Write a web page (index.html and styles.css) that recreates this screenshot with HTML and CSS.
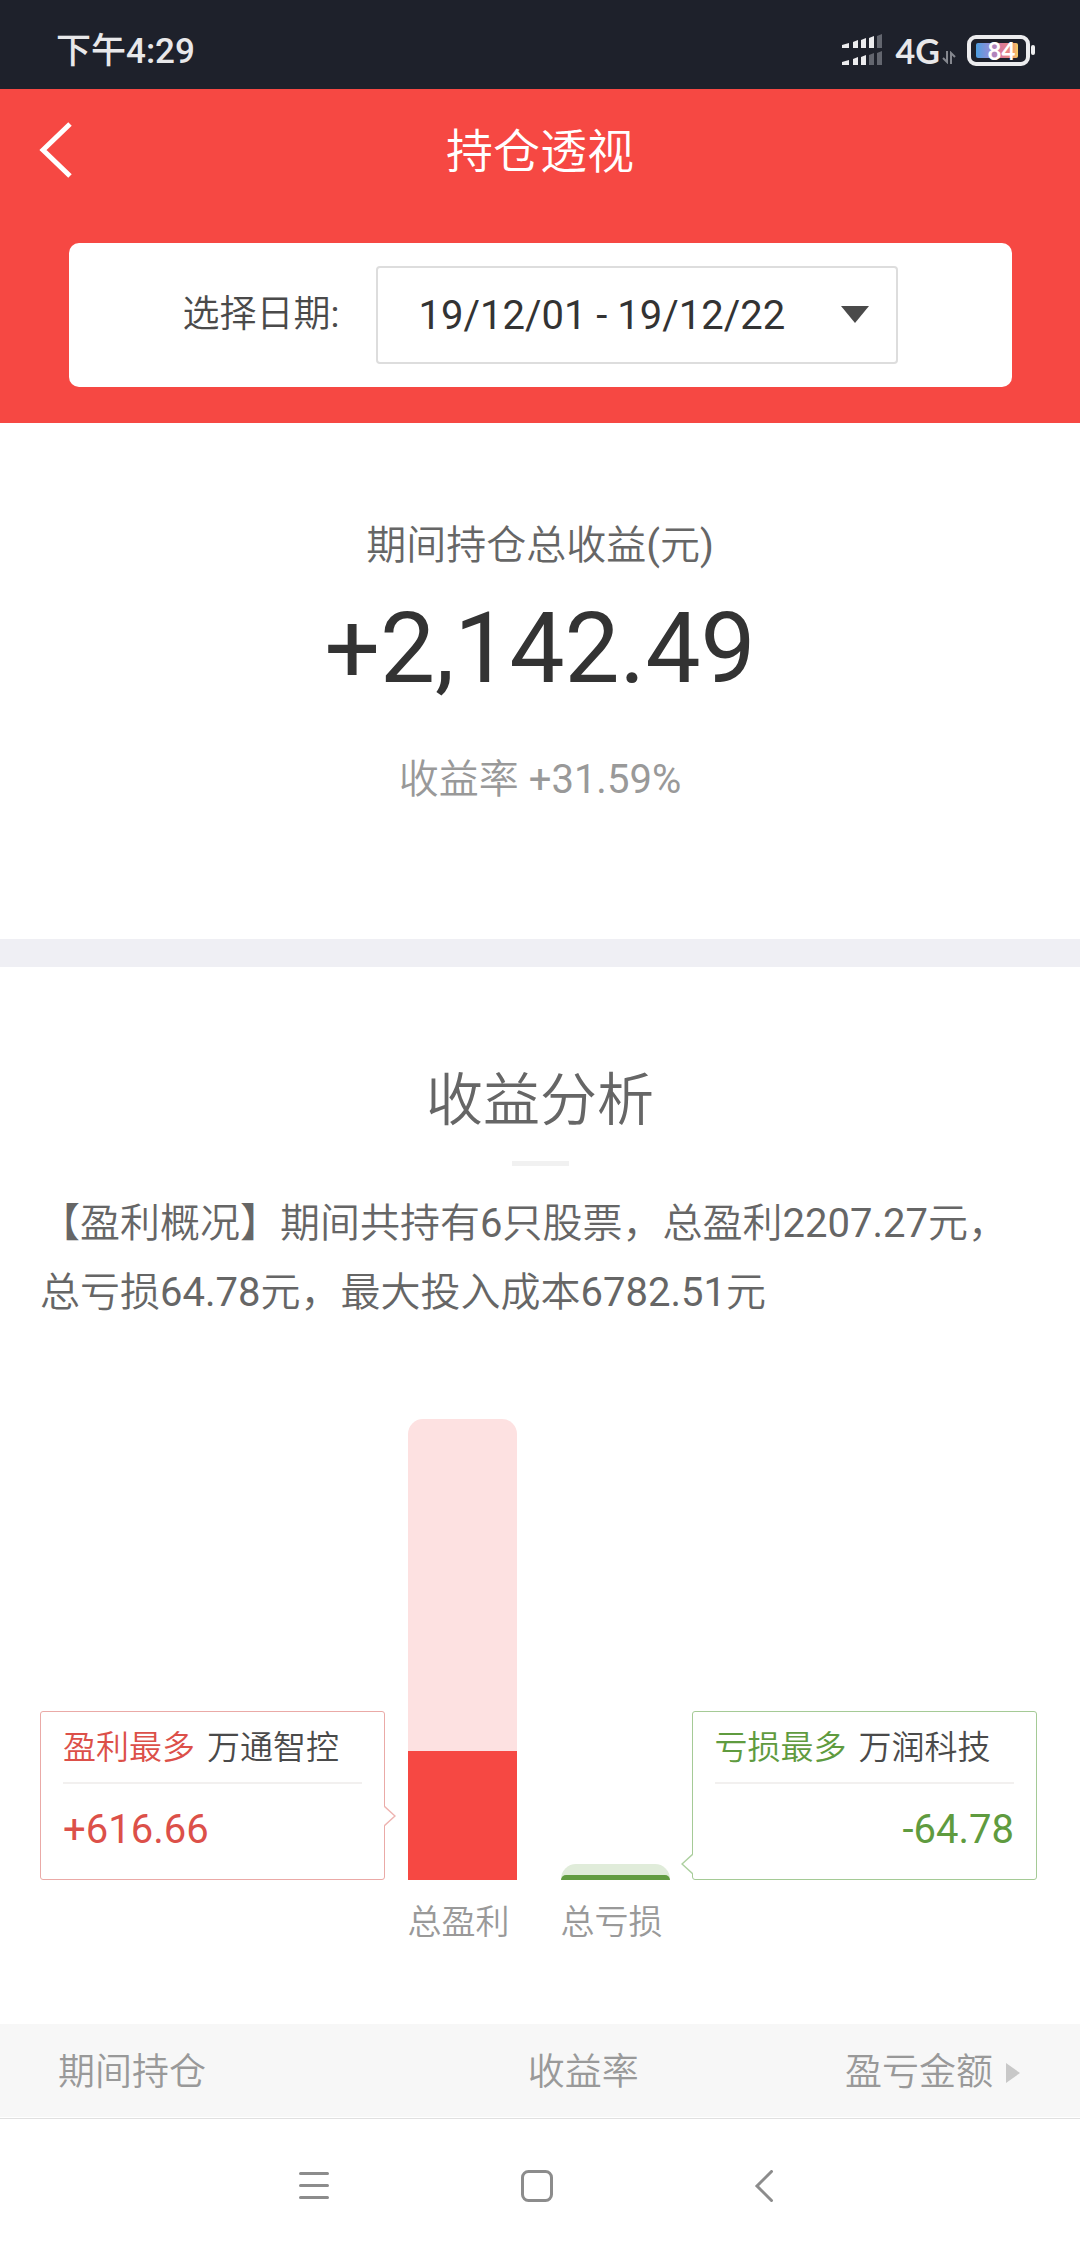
FILE: index.html
```html
<!DOCTYPE html>
<html lang="zh-CN">
<head>
<meta charset="utf-8">
<meta name="viewport" content="width=device-width, initial-scale=1">
<title>持仓透视</title>
<link rel="stylesheet" href="styles.css">
</head>
<body>
<div class="status-bar">
  <time class="status-time">下午4:29</time>
  <div class="status-icons">
    <svg class="signal" width="42" height="34" viewBox="0 0 42 34" aria-hidden="true">
      <g fill="#ececee">
        <path d="M1 11l7-2v5H1zM12 8l5-2v8h-5zM20 6l5-2v10h-5zM28 4l5-2v12h-5z"/>
        <path d="M1 28l7-2v5H1zM12 25l5-2v8h-5zM20 23l5-2v10h-5z"/>
      </g>
      <path fill="#63666f" d="M36 2l5-2v14h-5zM28 21l5-2v12h-5zM36 19l5-2v14h-5z"/>
    </svg>
    <span class="network">4G</span>
    <svg class="traffic" width="14" height="13" viewBox="0 0 14 13" aria-hidden="true">
      <path fill="none" stroke="#85878e" stroke-width="2" d="M5 0v11L1 7M9 13V2l4 4"/>
    </svg>
    <div class="battery">
      <svg width="70" height="32" viewBox="0 0 70 32" aria-hidden="true">
        <defs>
          <linearGradient id="charge">
            <stop offset="0" stop-color="#4d9fe0"/>
            <stop offset=".3" stop-color="#8d8fd8"/>
            <stop offset=".6" stop-color="#d9799b"/>
            <stop offset=".85" stop-color="#ee8d77"/>
            <stop offset="1" stop-color="#f4cf62"/>
          </linearGradient>
        </defs>
        <rect x="2" y="2" width="59" height="27" rx="7" fill="none" stroke="#ececee" stroke-width="4"/>
        <rect x="9" y="8" width="42" height="15" rx="2" fill="url(#charge)"/>
        <rect x="64" y="10" width="4" height="10" rx="2" fill="#ececee"/>
      </svg>
      <span class="battery-level">84</span>
    </div>
  </div>
</div>

<header class="hero">
  <div class="title-bar">
    <button class="back" type="button" aria-label="返回">
      <svg width="34" height="56" viewBox="0 0 34 56" aria-hidden="true"><path d="M32 2L5 28l27 26" fill="none" stroke="#fff" stroke-width="5"/></svg>
    </button>
    <h1 class="page-title">持仓透视</h1>
  </div>
  <div class="date-card">
    <label class="date-label" for="range">选择日期:</label>
    <div class="date-field">
      <select class="date-select" id="range">
        <option>19/12/01 - 19/12/22</option>
      </select>
      <svg class="caret" width="28" height="17" viewBox="0 0 28 17" aria-hidden="true"><path d="M0 0h28L14 17z" fill="#4a4a4a"/></svg>
    </div>
  </div>
</header>

<main>
  <section class="summary">
    <p class="summary-label">期间持仓总收益(元)</p>
    <p class="summary-total">+2,142.49</p>
    <p class="summary-rate">收益率 +31.59%</p>
  </section>

  <section class="analysis">
    <h2 class="analysis-title">收益分析</h2>
    <p class="analysis-text">【盈利概况】期间共持有6只股票，总盈利2207.27元，总亏损64.78元，最大投入成本6782.51元</p>
    <div class="chart">
      <div class="callout callout-gain">
        <p class="callout-head"><span class="callout-tag">盈利最多</span><span>万通智控</span></p>
        <p class="callout-value">+616.66</p>
        <svg class="notch" width="12" height="20" viewBox="0 0 12 20" aria-hidden="true"><path d="M0 0l11 10L0 20" fill="#fff" stroke="#eeb4b1" stroke-width="1.5"/></svg>
      </div>
      <div class="bar bar-gain" style="height: 461px"><div class="bar-top bar-top-gain" style="height: 28%"></div></div>
      <div class="bar bar-loss" style="height: 16px"><div class="bar-top bar-top-loss" style="height: 31%"></div></div>
      <div class="callout callout-loss">
        <p class="callout-head"><span class="callout-tag">亏损最多</span><span>万润科技</span></p>
        <p class="callout-value">-64.78</p>
        <svg class="notch" width="12" height="20" viewBox="0 0 12 20" aria-hidden="true"><path d="M12 0L1 10l11 10" fill="#fff" stroke="#add0a0" stroke-width="1.5"/></svg>
      </div>
      <p class="bar-label bar-label-gain">总盈利</p>
      <p class="bar-label">总亏损</p>
    </div>
  </section>

  <table class="holdings">
    <thead>
      <tr>
        <th class="col-name" scope="col">期间持仓</th>
        <th class="col-rate" scope="col">收益率</th>
        <th class="col-amount" scope="col">
          <button class="sort" type="button">盈亏金额<svg width="14" height="20" viewBox="0 0 14 20" aria-hidden="true"><path d="M0 0l14 10L0 20z" fill="#c8c8c8"/></svg></button>
        </th>
      </tr>
    </thead>
  </table>
</main>

<nav class="system-nav">
  <button class="nav-button" type="button" aria-label="最近任务"><svg width="34" height="34" viewBox="0 0 34 34"><path d="M3.5 3.5h27M3.5 15.5h27M3.5 27.5h27" stroke="#8c8c8c" stroke-width="3" stroke-linecap="round"/></svg></button>
  <button class="nav-button" type="button" aria-label="主屏幕"><svg width="34" height="34" viewBox="0 0 34 34"><rect x="2.5" y="1.5" width="29" height="29" rx="6" fill="none" stroke="#8c8c8c" stroke-width="3"/></svg></button>
  <button class="nav-button" type="button" aria-label="返回"><svg width="34" height="34" viewBox="0 0 34 34"><path d="M28.5 1.5L14 16l14.5 14.5" fill="none" stroke="#8c8c8c" stroke-width="3" stroke-linecap="round"/></svg></button>
</nav>
</body>
</html>
```

FILE: styles.css
```css
* {
  box-sizing: border-box;
}

body {
  margin: 0;
  background: #fff;
  color: #666;
  font-family: Roboto, "Noto Sans CJK SC DemiLight", "Noto Sans CJK SC", sans-serif;
  font-size: 40px;
  font-weight: 400;
}

h1, h2, p {
  margin: 0;
  font-weight: inherit;
}

button, select {
  margin: 0;
  padding: 0;
  border: 0;
  background: none;
  color: inherit;
  font: inherit;
}

svg {
  display: block;
}

/* Status bar */
.status-bar {
  display: flex;
  align-items: center;
  justify-content: space-between;
  height: 89px;
  padding: 12px 43px 0 56px;
  background: #1e212b;
  color: #e8e8ea;
}

.status-time {
  padding-top: 2px;
  font-family: Roboto, "Noto Sans CJK SC", sans-serif;
  font-size: 35px;
  font-weight: 500;
  line-height: 40px;
}

.status-icons {
  display: flex;
  align-items: center;
}

.network {
  margin-left: 13px;
  font-family: Lato, sans-serif;
  font-size: 34px;
  font-weight: 700;
  line-height: 38px;
}

.traffic {
  align-self: flex-end;
  margin: 0 11px 6px 2px;
}

.battery {
  position: relative;
}

.battery-level {
  position: absolute;
  inset: 0 1px 0 0;
  color: #fff;
  font-family: Lato, sans-serif;
  font-size: 24px;
  font-weight: 700;
  line-height: 31px;
  text-align: center;
}

/* Header */
.hero {
  padding-bottom: 36px;
  background: #f64843;
}

.title-bar {
  display: grid;
  grid-template-columns: 1fr auto 1fr;
  align-items: center;
  height: 122px;
  padding: 0 38px;
  color: #fff;
}

.back {
  justify-self: start;
}

.page-title {
  padding-top: 4px;
  font-size: 47px;
  line-height: 56px;
}

.date-card {
  display: flex;
  align-items: center;
  justify-content: center;
  gap: 37px;
  height: 144px;
  margin: 32px 68px 0 69px;
  border-radius: 10px;
  background: #fff;
}

.date-label {
  color: #4a4a4a;
  font-size: 37px;
  line-height: 48px;
}

.date-field {
  position: relative;
  width: 522px;
}

.date-select {
  display: block;
  width: 100%;
  height: 98px;
  padding: 0 40px;
  border: 2px solid #ddd;
  border-radius: 4px;
  appearance: none;
  color: #333;
}

.caret {
  position: absolute;
  top: 40px;
  right: 29px;
  pointer-events: none;
}

/* Summary */
.summary {
  padding: 95px 40px 131px;
  border-bottom: 28px solid #efeff4;
  text-align: center;
}

.summary-label {
  line-height: 56px;
}

.summary-total {
  margin-top: 25px;
  color: #333;
  font-size: 98px;
  line-height: 100px;
}

.summary-rate {
  margin-top: 53px;
  color: #999;
  line-height: 56px;
}

/* Analysis */
.analysis {
  padding: 94px 40px 78px;
}

.analysis-title {
  font-size: 57px;
  line-height: 80px;
  text-align: center;
}

.analysis-title::after {
  content: "";
  display: block;
  width: 57px;
  height: 5px;
  margin: 20px auto 0;
  background: #f1f1f1;
}

.analysis-text {
  margin-top: 23px;
  line-height: 69px;
}

.chart {
  display: grid;
  grid-template-columns: 1fr 109px 109px 1fr;
  align-items: end;
  column-gap: 44px;
  margin: 92px 3px 0 0;
}

.bar {
  display: flex;
  align-items: flex-end;
  border-radius: 15px 15px 0 0;
  overflow: hidden;
}

.bar-gain {
  background: #fde1e1;
}

.bar-loss {
  background: #e0ecda;
}

.bar-top {
  width: 100%;
}

.bar-top-gain {
  background: #f64843;
}

.bar-top-loss {
  border-radius: 5px 5px 0 0;
  background: #629c42;
}

.callout {
  position: relative;
  height: 169px;
  padding: 2px 22px 0;
  border: 1px solid;
  border-radius: 3px;
}

.callout-gain {
  margin-right: -21px;
  border-color: #eaaaa7;
  color: #dc5049;
}

.callout-loss {
  margin-left: -22px;
  border-color: #a5ca96;
  color: #5f9b3f;
}

.callout-head {
  display: flex;
  gap: 12px;
  border-bottom: 2px solid #f2f0ef;
  color: #4a4a4a;
  font-size: 33px;
  line-height: 68px;
}

.callout-gain .callout-tag {
  color: #dc5049;
}

.callout-loss .callout-tag {
  color: #5f9b3f;
}

.callout-value {
  line-height: 92px;
}

.callout-loss .callout-value {
  text-align: right;
}

.notch {
  position: absolute;
}

.callout-gain .notch {
  top: 94px;
  right: -12px;
}

.callout-loss .notch {
  bottom: 5px;
  left: -12px;
}

.bar-label {
  margin-top: 18px;
  color: #999;
  font-size: 34px;
  line-height: 48px;
}

.bar-label-gain {
  grid-column: 2;
}

/* Holdings table */
.holdings {
  width: 100%;
  border-collapse: collapse;
  table-layout: fixed;
  background: #f7f7f7;
  color: #999;
  font-size: 37px;
  line-height: 48px;
}

.holdings th {
  height: 93px;
  padding: 4px 0 0;
  font-weight: inherit;
}

.holdings .col-name {
  width: 46%;
  padding-left: 58px;
  text-align: left;
}

.col-rate {
  width: 16%;
}

.holdings .col-amount {
  padding-right: 60px;
}

.sort {
  display: flex;
  align-items: center;
  gap: 13px;
  margin-left: auto;
}

/* System navigation */
.system-nav {
  display: flex;
  justify-content: center;
  gap: 189px;
  margin-top: 1px;
  padding: 51px 6px 44px 0;
  border-top: 1px solid #e0e0e0;
}
```
